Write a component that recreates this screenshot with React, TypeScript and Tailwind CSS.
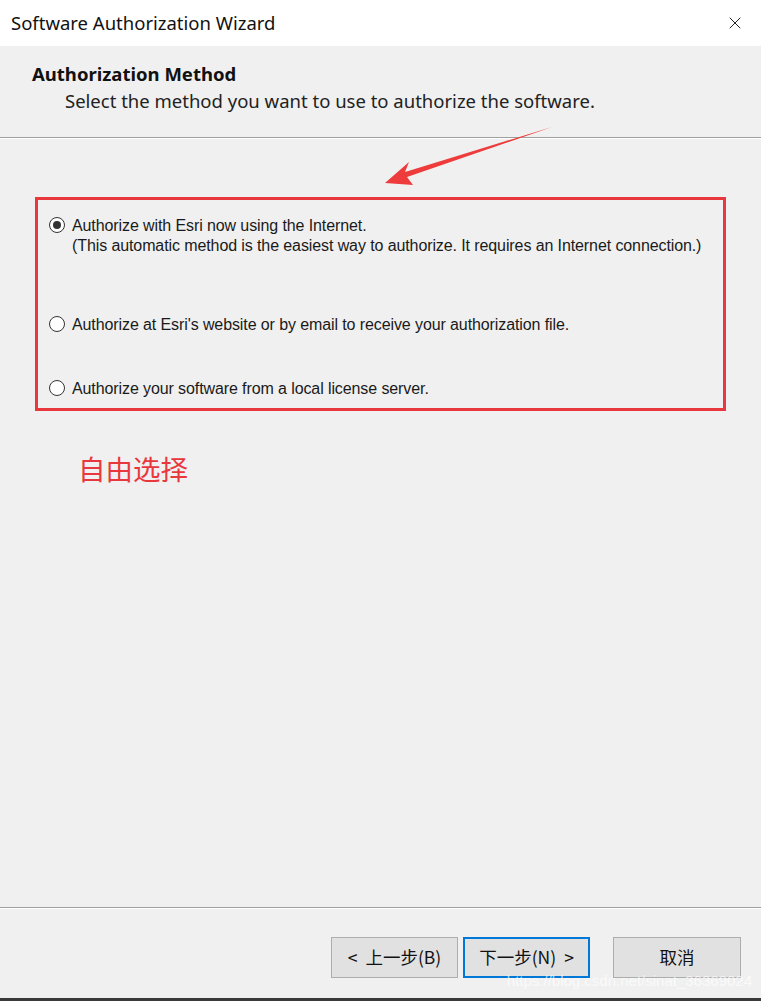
import { X } from 'lucide-react';

const options = [
  {
    label: 'Authorize with Esri now using the Internet.',
    note: '(This automatic method is the easiest way to authorize. It requires an Internet connection.)',
    checked: true,
  },
  { label: "Authorize at Esri's website or by email to receive your authorization file.", checked: false },
  { label: 'Authorize your software from a local license server.', checked: false },
];

function Radio({ checked }: { checked: boolean }) {
  return (
    <span className="mt-[1px] flex h-[16px] w-[16px] shrink-0 items-center justify-center rounded-full border border-[#333] bg-white">
      {checked && <span className="h-[8px] w-[8px] rounded-full bg-[#333]" />}
    </span>
  );
}

export default function App() {
  return (
    <div
      className="relative flex h-[1001px] w-[761px] flex-col overflow-hidden bg-[#f0f0f0] text-[#000]"
      style={{ fontFamily: '"Noto Sans", "Noto Sans CJK SC", sans-serif' }}
    >
      <div className="flex h-[46px] items-center justify-between bg-white pl-[11px] pr-[16px]">
        <span className="text-[18.5px] text-[#111]">Software Authorization Wizard</span>
        <X className="h-[20px] w-[20px] text-[#222]" strokeWidth={1.2} />
      </div>

      <div className="h-[91px] pl-[32px] pt-[16px]">
        <div className="text-[18.5px] font-bold leading-[24px] text-[#111]">Authorization Method</div>
        <div className="mt-[3px] pl-[33px] text-[18.5px] leading-[24px] text-[#222]">
          Select the method you want to use to authorize the software.
        </div>
      </div>
      <div className="h-[2px] border-t border-[#a0a0a0] bg-white" />

      <div className="relative flex-1 px-[35px] pt-[58px]">
        <svg className="absolute left-[380px] top-[-12px]" width="180" height="70" viewBox="0 0 180 70">
          <polygon points="172,0 25,45 29,35 5,56 33,58 27,50" fill="#ee3b3b" />
        </svg>

        <div
          className="h-[214px] w-[691px] border-[3px] border-[#e8373d] pl-[11px] pt-[16px] text-[16px] tracking-[-0.1px] text-[#1a1a1a]"
          style={{ fontFamily: '"Liberation Sans", Arial, sans-serif' }}
        >
          {options.map((o, i) => (
            <div key={i} className={`flex items-start gap-[7px] ${i === 1 ? 'mt-[59px]' : i === 2 ? 'mt-[44px]' : ''}`}>
              <Radio checked={o.checked} />
              <div className="leading-[20px]">
                <div>{o.label}</div>
                {o.note && <div>{o.note}</div>}
              </div>
            </div>
          ))}
        </div>

        <div className="ml-[43px] mt-[37px] text-[27.5px] text-[#e8373d]" style={{ fontFamily: '"Noto Sans CJK SC", sans-serif' }}>
          自由选择
        </div>
      </div>

      <div className="h-[2px] border-t border-[#a0a0a0] bg-white" />
      <div className="relative flex h-[89px] items-start pl-[331px] pt-[28px] text-[17.5px] text-[#111]" style={{ fontFamily: '"Noto Sans CJK SC", sans-serif' }}>
        <button className="flex h-[41px] w-[127px] items-center justify-center gap-[8px] border border-[#adadad] bg-[#e1e1e1]">
          <span>&lt;</span>
          <span>上一步(B)</span>
        </button>
        <button className="ml-[5px] flex h-[41px] w-[127px] items-center justify-center gap-[8px] border-2 border-[#0078d7] bg-[#e1e1e1]">
          <span>下一步(N)</span>
          <span>&gt;</span>
        </button>
        <button className="ml-[23px] flex h-[41px] w-[128px] items-center justify-center border border-[#adadad] bg-[#e1e1e1]">
          取消
        </button>
        <span
          className="absolute bottom-[6px] right-[9px] text-[15px] text-white/70"
          style={{ fontFamily: '"Liberation Sans", Arial, sans-serif' }}
        >
          https://blog.csdn.net/sinat_36369024
        </span>
      </div>
      <div className="h-[3px] bg-[#3a3a3a]" />
    </div>
  );
}
